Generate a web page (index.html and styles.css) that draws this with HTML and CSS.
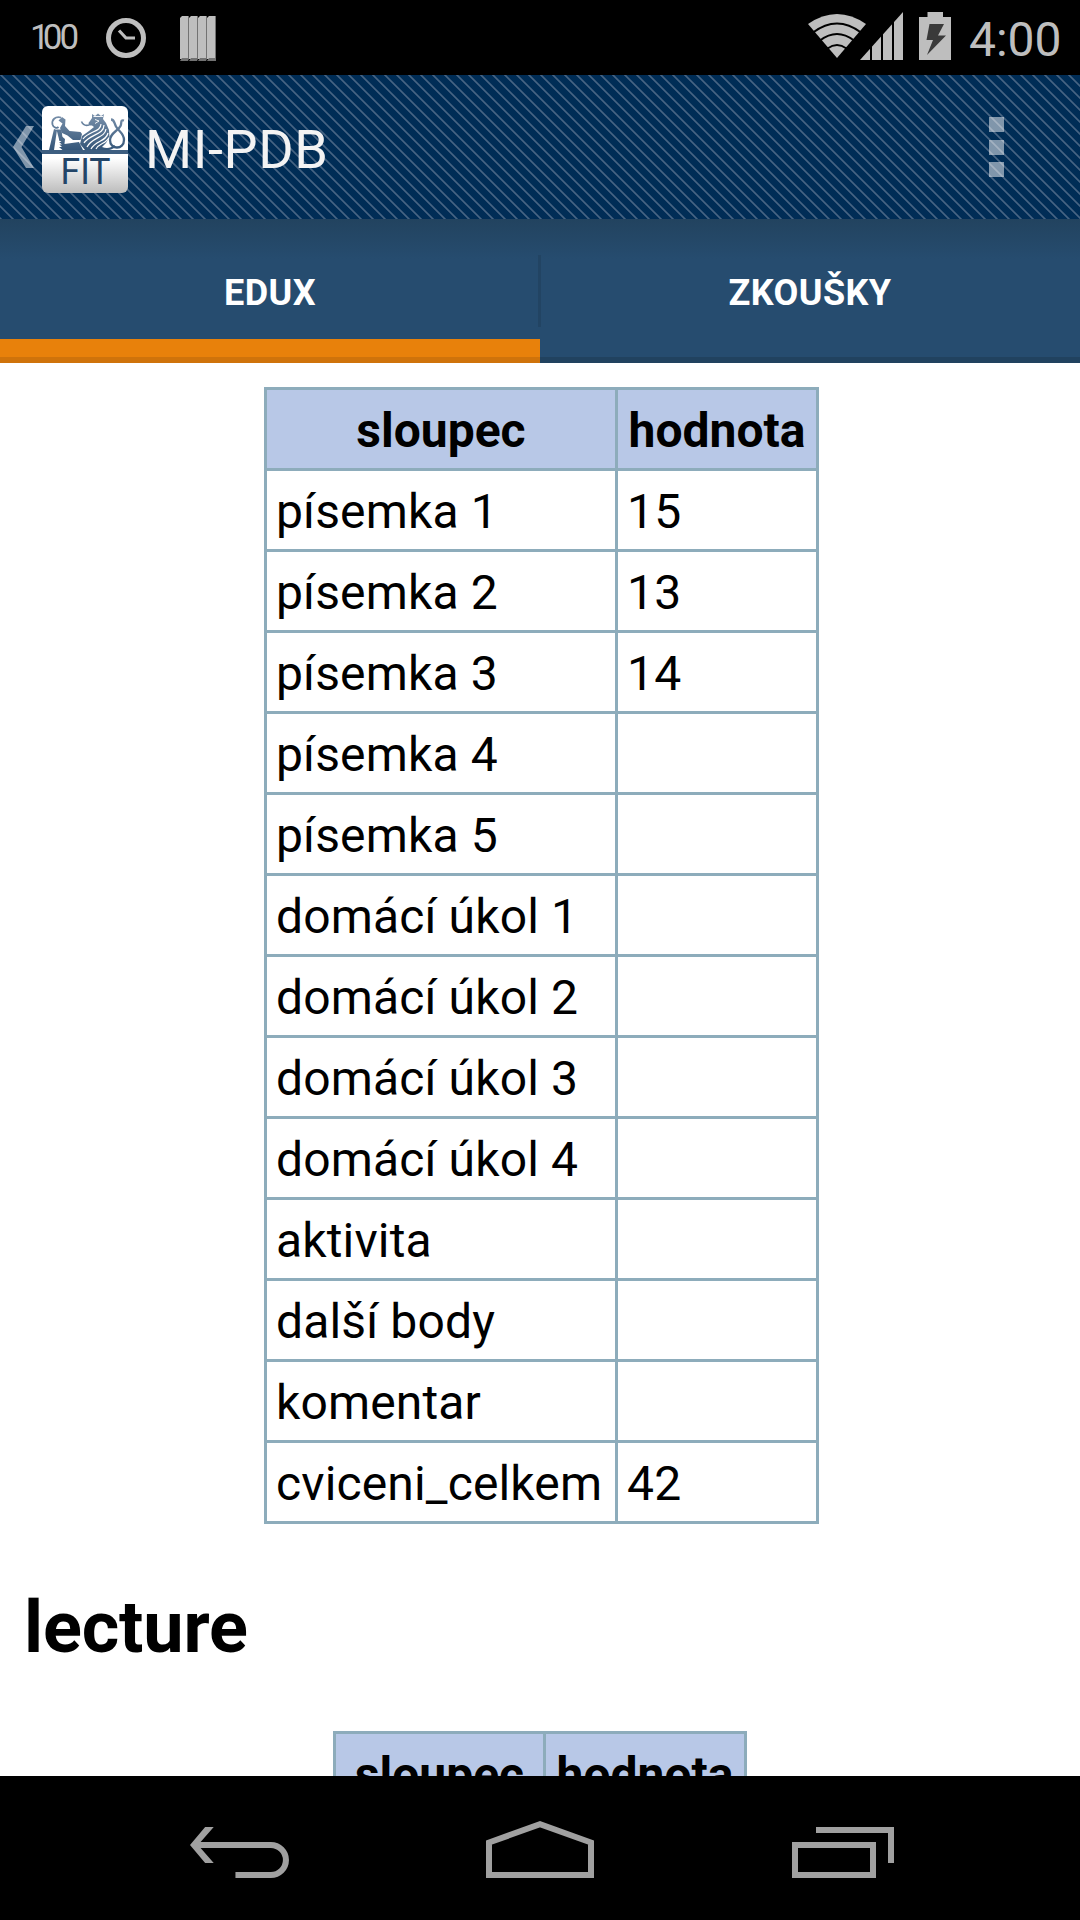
FILE: index.html
```html
<!DOCTYPE html>
<html lang="cs">
<head>
<meta charset="utf-8">
<title>MI-PDB</title>
<link rel="stylesheet" href="styles.css">
</head>
<body>
<div class="screen">
  <header class="status">
    <div class="status-left">
      <span class="battery-level"><span class="one">1</span>00</span>
      <svg class="clock" width="40" height="40" viewBox="0 0 40 40"><circle cx="20" cy="20" r="17.5" fill="none" stroke="#bebebe" stroke-width="5"/><path d="M13 12.500L20 20H29" fill="none" stroke="#bebebe" stroke-width="3.200"/></svg>
      <svg class="bars" width="36" height="46" viewBox="0 0 36 46">
        <path d="M2 1h6v43H0V3zM11 1h6v43H9V3zM20 1h6v43h-8V3zM29 1h6v43h-8V3z" fill="#bebebe"/>
        <path d="M8 1h1v43l-1 2H0l2-3h6zM17 1h1v43l-1 2H9l2-3h6zM26 1h1v43l-1 2h-8l2-3h6zM35 1h1v45h-9l2-3h6z" fill="#727272"/>
      </svg>
    </div>
    <div class="status-right">
      <svg class="wifi" width="58" height="44" viewBox="0 0 58 44">
        <path d="M0 10Q29-10 58 10L29 44Z" fill="#bebebe"/>
        <path d="M5 18.500Q29 .500 53 18.500M12 26.500Q29 13.500 46 26.500M19.500 34.500Q29 27.500 38.500 34.500" fill="none" stroke="#000" stroke-width="2"/>
      </svg>
      <svg class="signal" width="43" height="48" viewBox="0 0 43 48"><path d="M0 48L43 0V48Z" fill="#bebebe"/><path d="M11 0V48M22 0V48M33 0V48" stroke="#000" stroke-width="2"/></svg>
      <svg class="battery" width="32" height="48" viewBox="0 0 32 48"><path d="M8.500 0H24V5H32V48H0V5H8.500Z" fill="#bebebe"/><path d="M10.500 12H25L19 23.500H27L8 43L14 28H7.500Z" fill="#3a3a3a"/></svg>
      <span class="time">4:00</span>
    </div>
  </header>
  <div class="actionbar">
    <svg class="up" width="21" height="42" viewBox="0 0 21 42"><path d="M13 0H21L8.500 21L21 42H13L0 21Z" fill="#fff" fill-opacity=".5"/></svg>
    <svg class="logo" width="86" height="87" viewBox="0 0 86 87">
      <defs>
        <linearGradient id="plate" x1="0" y1="0" x2="0" y2="1"><stop offset=".6" stop-color="#fff"/><stop offset="1" stop-color="#bcbcbc"/></linearGradient>
        <linearGradient id="ink" gradientUnits="userSpaceOnUse" x1="0" y1="8" x2="0" y2="44"><stop offset="0" stop-color="#7a91ab"/><stop offset="1" stop-color="#345679"/></linearGradient>
      </defs>
      <rect width="86" height="87" rx="6" fill="url(#plate)"/>
      <path d="M7 44L12 23L15 24L12 44ZM14.500 23.500H19.500L20.500 32L17.500 35Z" fill="url(#ink)"/>
      <path d="M19 11.500C13 10 9.500 14 10.500 18.500C11.500 22 15 22.500 16.500 21" fill="none" stroke="url(#ink)" stroke-width="1.800"/>
      <path d="M16.500 14.500L20 11L23.500 13.500L23 20L27.500 25L38.500 26L40 28L38.500 34H31L25.500 29.500L20 27L18 22L20.500 17.500Z" fill="url(#ink)"/>
      <path d="M17 34L20 30.500L23 33L22.500 38L37 36L41 44H20.500L17 41H20L17.500 38.500H20L17 36H19.500Z" fill="url(#ink)"/>
      <path d="M50 8L53 10L56 7.500L59 10L62 8L61 13L64 17L67 24L67.500 31L64 37L60 41C65 43 69 42 72 39L74 40.500C70 44.500 64 45 59 44H43L38 38L40 30L47 25L52 21L50 19.500L47 19.500L46.500 17L48 15L50 12Z" fill="url(#ink)"/>
      <path d="M39.500 15.500C41 19 43.500 20 47 19" fill="none" stroke="url(#ink)" stroke-width="1.600"/>
      <path d="M59 18C59 26 47 25 41 33M62 19C62 29 48 28 42 37M64 23C63 32 50 31 45 41M66 27C64 36 54 34 49 43M67 31.500C64 38 57 37 54 43" fill="none" stroke="#fff" stroke-width="1.200"/>
      <path d="M53 13.500L57 15L53 17.500M51.500 10.500H61" fill="none" stroke="#fff" stroke-width=".9"/>
      <path d="M69 13.500C72.500 13.500 72 17 74 20.500C77 26 82 27 82 34C82 44 68 44 68 34C68 27 76 25 78.500 20C80 17 78 13.500 82 14.500" fill="none" stroke="url(#ink)" stroke-width="2.300"/>
      <rect y="44" width="86" height="4" fill="#3d5e80"/>
      <text class="logo-text" x="18.500" y="77.500" textLength="50" lengthAdjust="spacingAndGlyphs">FIT</text>
    </svg>
    <h1 class="title">MI-PDB</h1>
    <div class="overflow"><i></i><i></i><i></i></div>
  </div>
  <nav class="tabs">
    <div class="tab active">EDUX</div>
    <div class="tab">ZKOUŠKY</div>
  </nav>
  <main class="content">
    <table class="grades">
      <colgroup><col class="c-name"><col class="c-value"></colgroup>
      <tr><th>sloupec</th><th>hodnota</th></tr>
      <tr><td>písemka 1</td><td>15</td></tr>
      <tr><td>písemka 2</td><td>13</td></tr>
      <tr><td>písemka 3</td><td>14</td></tr>
      <tr><td>písemka 4</td><td></td></tr>
      <tr><td>písemka 5</td><td></td></tr>
      <tr><td>domácí úkol 1</td><td></td></tr>
      <tr><td>domácí úkol 2</td><td></td></tr>
      <tr><td>domácí úkol 3</td><td></td></tr>
      <tr><td>domácí úkol 4</td><td></td></tr>
      <tr><td>aktivita</td><td></td></tr>
      <tr><td>další body</td><td></td></tr>
      <tr><td>komentar</td><td></td></tr>
      <tr><td>cviceni_celkem</td><td>42</td></tr>
    </table>
    <h2 class="section">lecture</h2>
    <table class="grades narrow">
      <colgroup><col class="c-name"><col class="c-value"></colgroup>
      <tr><th>sloupec</th><th>hodnota</th></tr>
    </table>
  </main>
  <footer class="navbar">
    <svg width="99" height="51" viewBox="0 0 99 51"><path d="M15 0H23.500L10.500 15H80A18 18 0 0 1 80 51H45V45H80A12 12 0 0 0 80 21H10.500L23.500 36H15L0 18Z" fill="#a0a0a0" transform="scale(1.010 1)"/></svg>
    <svg class="home" width="108" height="57" viewBox="0 0 108 57"><path d="M3 54V21.500L54 3.200L105 21.500V54Z" fill="none" stroke="#a0a0a0" stroke-width="6"/></svg>
    <svg width="102" height="51" viewBox="0 0 102 51"><path d="M3 18H81V48H3ZM24 3H99V36" fill="none" stroke="#a0a0a0" stroke-width="6"/></svg>
  </footer>
</div>
</body>
</html>
```
FILE: styles.css
```css
* { box-sizing: border-box; }
body { margin: 0; background: #000; font-family: Roboto, sans-serif; }
.screen { width: 1080px; height: 1920px; display: flex; flex-direction: column; overflow: hidden; }
svg { display: block; flex: none; }

.status { height: 75px; flex: none; background: #000; color: #bebebe; display: flex; justify-content: space-between; }
.status-left, .status-right { display: flex; align-items: flex-start; }
.battery-level { margin: 16px 0 0 30px; width: 76px; font-size: 35px; line-height: 44px; letter-spacing: -2.800px; }
.battery-level .one { letter-spacing: -7px; }
.clock { margin-top: 18px; }
.bars { margin: 15px 0 0 34px; }
.wifi { margin-top: 14px; }
.signal { margin: 12px 0 0 -6px; }
.battery { margin: 12px 0 0 16px; }
.time { margin: 12px 18px 0 18px; width: 93px; font-size: 48px; line-height: 56px; white-space: nowrap; }

.actionbar { height: 144px; flex: none; display: flex; align-items: flex-start; background: repeating-linear-gradient(45deg, #365577 0, #486886 .6px, #365577 1.300px, #002d56 2px, #002d56 7.885px, #365577 8.48528px); }
.up { margin: 51px 0 0 13px; }
.logo { margin: 31px 0 0 8px; }
.logo-text { font-family: Roboto, sans-serif; font-size: 36px; fill: #234568; }
.title { margin: 45px 0 0 17px; font-size: 54px; line-height: 60px; font-weight: 400; letter-spacing: .6px; color: #f3f3f3; }
.overflow { margin: 42px 76px 0 auto; display: flex; flex-direction: column; gap: 7.500px; }
.overflow i { width: 15px; height: 15px; background: rgba(255, 255, 255, .5); }

.tabs { height: 144px; flex: none; display: flex; background: linear-gradient(#22435f, #264c6f 40px); }
.tab { flex: 1; display: flex; align-items: center; justify-content: center; padding-top: 9px; border-bottom: 6px solid #21425f; font-size: 36px; font-weight: 700; letter-spacing: .4px; color: #fff; position: relative; }
.tab.active { border-bottom-color: #cf730b; box-shadow: inset 0 -18px #e8810b; }
.tab.active::after { content: ""; position: absolute; right: -1px; top: 36px; width: 3px; height: 72px; background: #224463; }

.content { flex: 1; min-height: 0; overflow: hidden; background: #fff; color: #000; padding: 24px; }
.grades { border-collapse: collapse; table-layout: fixed; width: 555px; margin: 0 0 0 240px; font-size: 48px; line-height: 56px; }
.grades .c-name { width: 351px; }
.grades tr { height: 81px; }
.grades th, .grades td { border: 3px solid #8dacbb; padding: 3px 9px 0; text-align: left; white-space: nowrap; }
.grades td { letter-spacing: .15px; }
.grades th { background: #b8c8e7; text-align: center; font-weight: 700; }
.grades.narrow { width: 414px; margin-left: 309px; }
.grades.narrow .c-name { width: 210px; }
.section { margin: 62px 0 61px; font-size: 72px; line-height: 84px; font-weight: 700; letter-spacing: -.15px; }

.navbar { height: 144px; flex: none; background: #000; display: flex; align-items: flex-start; padding: 51px 0 0 190px; }
.navbar .home { margin: -6px 198px 0 197px; }
```
